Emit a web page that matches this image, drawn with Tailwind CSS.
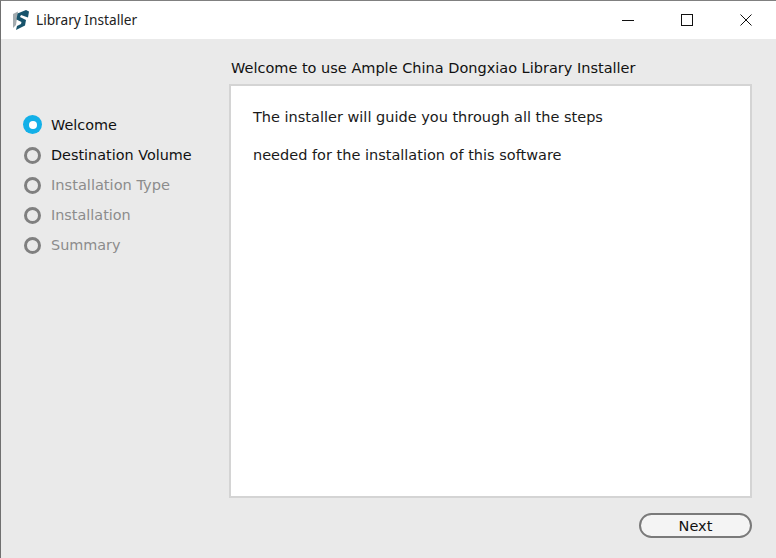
<!DOCTYPE html>
<html>
<head>
<meta charset="utf-8">
<script src="https://cdn.jsdelivr.net/npm/@tailwindcss/browser@4"></script>
</head>
<body class="w-[776px] h-[558px] overflow-hidden bg-[#eaeaea] font-['DejaVu_Sans',sans-serif]">
<div class="w-[776px] h-[558px] flex flex-col border-t border-t-[#808080] border-l border-l-[#707070]">
  <div class="h-[38px] bg-white flex items-center shrink-0">
    <svg class="ml-[11px] w-[18px] h-[20px]" viewBox="0 0 18 20">
      <path d="M1 4 L6 1.5 L4 15 L1 18 Z" fill="#a3abaf"/>
      <path d="M14 0 L17 1.5 L16 7.5 L9 5 L8 7 L14 10 L13 15.5 L4 20 L5 16 L9 14 L9.5 12 L4.5 9.5 L5.5 3.5 Z" fill="#17536b"/>
    </svg>
    <span class="ml-[6px] text-[13.7px] text-[#222] font-['Noto_Sans',sans-serif] leading-none">Library Installer</span>
    <div class="ml-auto flex items-center h-full">
      <svg class="w-[14px] h-[14px] mr-[45px]" viewBox="0 0 14 14"><path d="M1 7.5 H13" stroke="#111" stroke-width="1"/></svg>
      <svg class="w-[14px] h-[14px] mr-[45px]" viewBox="0 0 14 14"><rect x="1.5" y="1.5" width="11" height="11" fill="none" stroke="#111" stroke-width="1"/></svg>
      <svg class="w-[14px] h-[14px] mr-[23px]" viewBox="0 0 14 14"><path d="M1.5 1.5 L12.5 12.5 M12.5 1.5 L1.5 12.5" stroke="#111" stroke-width="1"/></svg>
    </div>
  </div>
  <div class="flex-1 flex min-h-0">
    <div class="w-[228px] shrink-0 pt-[76px] pl-[22px] flex flex-col gap-[12px] text-[14.4px] leading-[18px]">
      <div class="flex items-center gap-[9px] text-[#111]">
        <span class="w-[19px] h-[19px] rounded-full bg-[#13b0e8] flex items-center justify-center"><span class="w-[8px] h-[8px] rounded-full bg-white"></span></span>
        <span>Welcome</span>
      </div>
      <div class="flex items-center gap-[10px] text-[#111]">
        <span class="w-[17px] h-[17px] mx-[1px] rounded-full border-[3px] border-[#808080] bg-[#eaeaea]"></span>
        <span class="-ml-[1px]">Destination Volume</span>
      </div>
      <div class="flex items-center gap-[10px] text-[#8c8c8c]">
        <span class="w-[17px] h-[17px] mx-[1px] rounded-full border-[3px] border-[#808080] bg-[#eaeaea]"></span>
        <span class="-ml-[1px] text-[14.6px]">Installation Type</span>
      </div>
      <div class="flex items-center gap-[10px] text-[#8c8c8c]">
        <span class="w-[17px] h-[17px] mx-[1px] rounded-full border-[3px] border-[#808080] bg-[#eaeaea]"></span>
        <span class="-ml-[1px]">Installation</span>
      </div>
      <div class="flex items-center gap-[10px] text-[#8c8c8c]">
        <span class="w-[17px] h-[17px] mx-[1px] rounded-full border-[3px] border-[#808080] bg-[#eaeaea]"></span>
        <span class="-ml-[1px]">Summary</span>
      </div>
    </div>
    <div class="flex-1 flex flex-col min-w-0 pr-[24px]">
      <div class="h-[45px] pl-[2px] flex items-center text-[14.5px] text-[#111] shrink-0 pt-[15px]">Welcome to use Ample China Dongxiao Library Installer</div>
      <div class="h-[414px] w-[523px] bg-white border-[2px] border-[#d4d4d4] pl-[22px] pt-[21px] text-[14.5px] text-[#1a1a1a]">
        <p class="leading-[20px]">The installer will guide you through all the steps</p>
        <p class="leading-[20px] mt-[18px]">needed for the installation of this software</p>
      </div>
      <div class="flex justify-end mt-[15px]">
        <button class="w-[113px] h-[25px] rounded-full border-[2px] border-[#7a7a7a] bg-[#f4f4f4] text-[14.5px] text-[#111] leading-none pt-[1px]">Next</button>
      </div>
    </div>
  </div>
</div>
</body>
</html>
